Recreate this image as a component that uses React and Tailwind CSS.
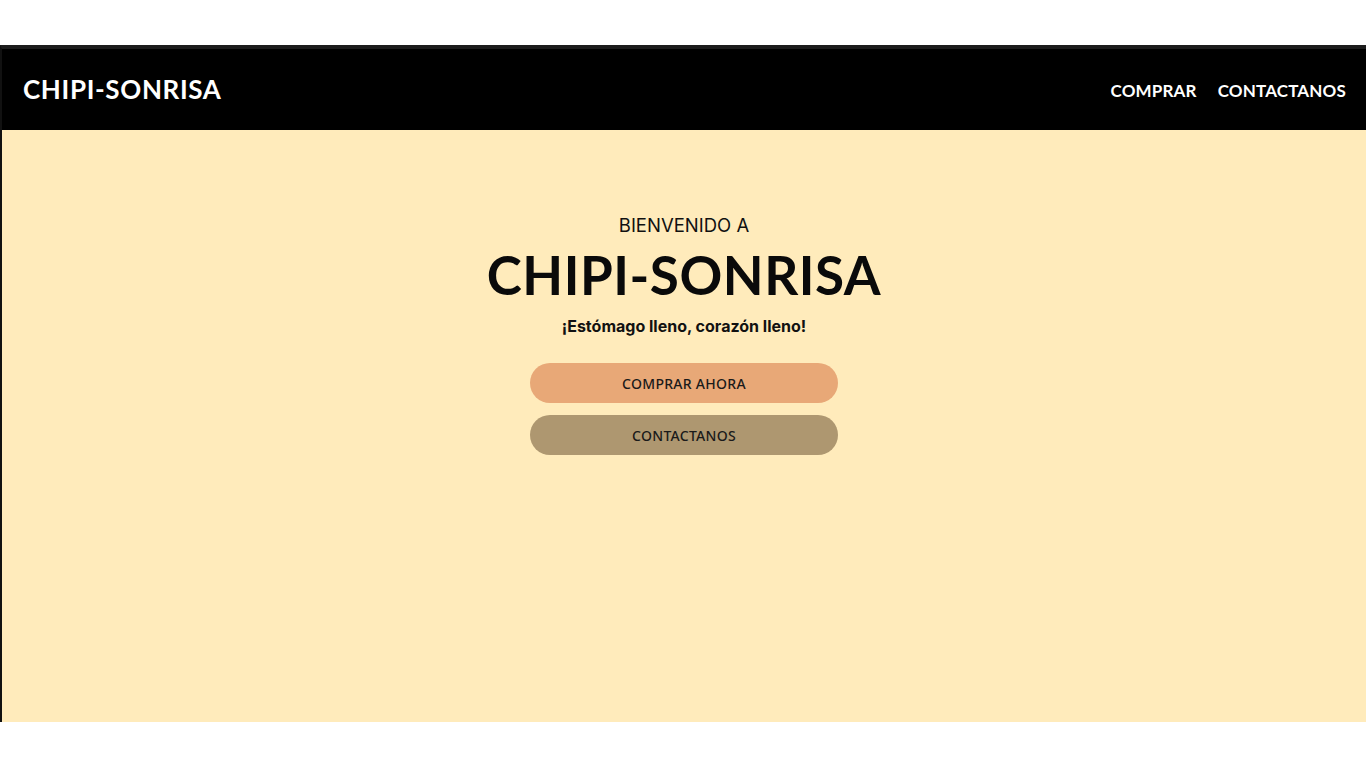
export default function App() {
  return (
    <div className="w-[1366px] h-[768px] bg-white pt-[45px]">
      <div className="h-[677px] flex flex-col border-l-2 border-t-4 border-l-[#111111] border-t-[#1c1c1c] bg-[#ffebbb]">
        <header className="h-[81px] bg-black flex items-center justify-between pl-[21px] pr-[20px]">
          <div className="text-white font-bold text-[26px] tracking-[0.025em] font-[family-name:Lato,sans-serif]">
            CHIPI-SONRISA
          </div>
          <nav className="flex gap-[21px] pt-[2px] text-white font-bold text-[17px] tracking-[0.01em] font-[family-name:Lato,sans-serif]">
            <a>COMPRAR</a>
            <a>CONTACTANOS</a>
          </nav>
        </header>
        <main className="flex-1 flex flex-col items-center pt-[82px]">
          <div className="text-[18.5px] text-[#111] leading-[26px] font-[family-name:Inter,sans-serif]">BIENVENIDO A</div>
          <h1 className="text-[53px] font-bold text-[#0a0a0a] leading-[64px] mt-[5px] tracking-[0.01em] font-[family-name:Lato,sans-serif]">CHIPI-SONRISA</h1>
          <p className="text-[16px] font-bold text-[#111] mt-[9px] leading-[20px] font-[family-name:Inter,sans-serif]">¡Estómago lleno, corazón lleno!</p>
          <div className="flex flex-col gap-[12px] mt-[27px]">
            <button className="w-[308px] h-[40px] rounded-full bg-[#e8a877] text-[14px] font-medium text-[#1a1a1a] tracking-[0.02em] font-[family-name:'Noto_Sans',sans-serif]">COMPRAR AHORA</button>
            <button className="w-[308px] h-[40px] rounded-full bg-[#ae9770] text-[14px] font-medium text-[#1a1a1a] tracking-[0.02em] font-[family-name:'Noto_Sans',sans-serif]">CONTACTANOS</button>
          </div>
        </main>
      </div>
    </div>
  );
}
